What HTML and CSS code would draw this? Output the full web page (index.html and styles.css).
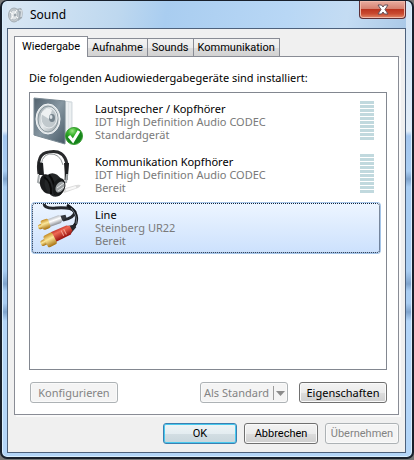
FILE: index.html
```html
<!DOCTYPE html>
<html lang="de">

<head>
    <meta charset="UTF-8">
    <meta name="viewport" content="width=device-width, initial-scale=1.0">
    <title>Sound</title>
    <link rel="stylesheet" href="styles.css">
</head>

<body>
    <div class="window">
        <header class="titlebar">
            <svg class="app-icon" width="16" height="16" viewBox="0 0 16 16">
                <path d="M8 2l5-1 2 4-1 6-4 3z" fill="#a3adb5" />
                <path d="M11 3l3 1-1 6" fill="none" stroke="#d5dce1" stroke-width="1.5" />
                <ellipse cx="6" cy="8" rx="5.5" ry="7" fill="#c4cace" stroke="#a3adb5" />
                <ellipse cx="6" cy="8" rx="3.5" ry="5" fill="#dfe3e6" stroke="#a5afb6" stroke-width=".7" />
                <path d="M2 5l8 6M3 12l6-9" stroke="#fff" />
                <circle cx="7" cy="8" r="1.5" fill="#9ca5ac" />
            </svg>
            <h1 class="title">Sound</h1>
            <button class="close" type="button" aria-label="Schließen">
                <svg width="12" height="11" viewBox="0 0 12 11">
                    <path d="M1 1h3.500L6 3l1.500-2H11L8 5.500 11 10H7.500L6 8l-1.500 2H1l3-4.500z" fill="#fff" stroke="#63515a" />
                </svg>
            </button>
        </header>

        <main class="client">
            <div class="tabs" role="tablist">
                <button class="tab active" type="button" role="tab" aria-selected="true">Wiedergabe</button>
                <button class="tab" type="button" role="tab">Aufnahme</button>
                <button class="tab" type="button" role="tab">Sounds</button>
                <button class="tab" type="button" role="tab">Kommunikation</button>
            </div>

            <section class="panel" role="tabpanel">
                <p class="intro" id="intro">Die folgenden Audiowiedergabegeräte sind installiert:</p>

                <ul class="devices" role="listbox" aria-labelledby="intro">
                    <li class="device" role="option">
                        <svg class="device-icon" width="50" height="50" viewBox="0 0 50 50">
                            <defs>
                                <linearGradient id="box" x2="1" y2="1">
                                    <stop offset="0" stop-color="#52626e" />
                                    <stop offset=".5" stop-color="#8797a2" />
                                    <stop offset="1" stop-color="#465966" />
                                </linearGradient>
                                <linearGradient id="cone" x2="1" y2="1">
                                    <stop offset="0" stop-color="#8c999f" />
                                    <stop offset=".5" stop-color="#e9edef" />
                                    <stop offset="1" stop-color="#8f9a9f" />
                                </linearGradient>
                                <radialGradient id="ok" cx=".4" cy=".2">
                                    <stop offset="0" stop-color="#9de586" />
                                    <stop offset=".5" stop-color="#38b52b" />
                                    <stop offset="1" stop-color="#16851b" />
                                </radialGradient>
                            </defs>
                            <path d="M31 4l8 1v30l-8 11z" fill="#e1e6e9" stroke="#d3dade" />
                            <path d="M34 5v36M37 6v30" stroke="#f7f9fa" />
                            <path d="M1 1l31 3v43L1 38z" fill="url(#box)" stroke="#7a8993" />
                            <ellipse cx="15" cy="22" rx="12" ry="15" fill="#d9dfe2" stroke="#f3f6f7" />
                            <ellipse cx="15" cy="22" rx="10" ry="13" fill="url(#cone)" stroke="#8c999f" />
                            <ellipse cx="16" cy="21" rx="8" ry="10" fill="#c1c9cd" stroke="#e9edef" />
                            <path d="M16 22L8 17q5-8 11-4z" fill="#eef1f2" />
                            <ellipse cx="19" cy="21" rx="3" ry="4" fill="#76848d" />
                            <ellipse cx="18" cy="20" rx="1.500" ry="2" fill="#dce2e6" />
                            <circle cx="41" cy="39" r="8.500" fill="url(#ok)" stroke="#3a9d34" />
                            <path d="M36 39l4 5 6-10" fill="none" stroke="#fff" stroke-width="3" />
                        </svg>
                        <div class="info">
                            <strong class="name">Lautsprecher / Kopfhörer</strong>
                            <span>IDT High Definition Audio CODEC</span>
                            <span>Standardgerät</span>
                        </div>
                        <div class="level"></div>
                    </li>
                    <li class="device" role="option">
                        <svg class="device-icon" width="50" height="50" viewBox="0 0 50 50">
                            <path d="M29 39l14-4q8-1 2 3l-14 5z" fill="#dcdcdc" />
                            <path d="M33 40l10-3" stroke="#f8f8f8" stroke-width="2" />
                            <path d="M6 24Q3 3 16 2q15-3 18 12l-1 16" fill="none" stroke="#292a2c" stroke-width="3" />
                            <path d="M8 22Q7 6 16 4q11-1 14 11" fill="none" stroke="#969a9c" />
                            <path d="M5 12l5 1 1 12H6zM31 13h5l-1 13-3 1z" fill="#1d1e20" />
                            <path d="M6 25l-1 7 5 3M34 24l-1 9" fill="none" stroke="#a6abad" stroke-width="2" />
                            <ellipse cx="14" cy="34" rx="7" ry="10" fill="#1a1b1d" transform="rotate(-15 14 34)" />
                            <ellipse cx="21" cy="35" rx="9" ry="12" fill="#242628" transform="rotate(-20 21 35)" />
                            <path d="M11 27q8 5 7 17M16 25q6 6 6 20" fill="none" stroke="#090909" stroke-width="2" />
                            <ellipse cx="26" cy="37" rx="6" ry="9" fill="#17191a" transform="rotate(20 26 37)" />
                            <ellipse cx="27" cy="37" rx="4" ry="6" fill="#9da2a4" transform="rotate(30 27 37)" />
                            <path d="M24 38l7-5M25 41l6-4" stroke="#e4e6e7" />
                        </svg>
                        <div class="info">
                            <strong class="name">Kommunikation Kopfhörer</strong>
                            <span>IDT High Definition Audio CODEC</span>
                            <span>Bereit</span>
                        </div>
                        <div class="level"></div>
                    </li>
                    <li class="device selected" role="option" aria-selected="true">
                        <svg class="device-icon" width="50" height="50" viewBox="0 0 50 50">
                            <defs>
                                <linearGradient id="gold" x2="0" y2="1">
                                    <stop offset="0" stop-color="#c48a22" />
                                    <stop offset=".4" stop-color="#fbe79a" />
                                    <stop offset="1" stop-color="#a8700f" />
                                </linearGradient>
                                <linearGradient id="silver" x2="0" y2="1">
                                    <stop offset="0" stop-color="#b9bdc3" />
                                    <stop offset=".4" stop-color="#fff" />
                                    <stop offset="1" stop-color="#8c9097" />
                                </linearGradient>
                                <linearGradient id="red" x2="0" y2="1">
                                    <stop offset="0" stop-color="#c5342c" />
                                    <stop offset=".3" stop-color="#ee6a55" />
                                    <stop offset="1" stop-color="#98110f" />
                                </linearGradient>
                            </defs>
                            <path d="M11 1q1 5 12 4 16-1 19 4-1 6-12 8" fill="none" stroke="#25282d" stroke-width="3" />
                            <path d="M34 2q12 7 9 18-2 4-5 6" fill="none" stroke="#15181c" stroke-width="3" />
                            <path d="M38 5q7 8 5 16" fill="none" stroke="#717a84" />
                            <g transform="translate(5 24) rotate(-20)">
                                <path d="M24-3l6 1v3l-6 2z" fill="#33373d" />
                                <path d="M11-4h12l2 1v5l-2 2H11z" fill="url(#silver)" />
                                <rect y="-2" width="6" height="5" rx="2" fill="url(#gold)" />
                                <rect x="4" y="-5" width="8" height="10" rx="2" fill="url(#gold)" />
                            </g>
                            <g transform="translate(8 41) rotate(-27)">
                                <path d="M32-4l7 2v3l-7 3z" fill="#24272c" />
                                <path d="M14-6l17 1 3 2v5l-3 3H14z" fill="url(#red)" />
                                <path d="M24-3v6M27-3v6" stroke="#f2a091" />
                                <rect y="-3" width="8" height="6" rx="2" fill="url(#gold)" />
                                <rect x="5" y="-6" width="10" height="13" rx="2" fill="url(#gold)" />
                            </g>
                        </svg>
                        <div class="info">
                            <strong class="name">Line</strong>
                            <span>Steinberg UR22</span>
                            <span>Bereit</span>
                        </div>
                    </li>
                </ul>

                <div class="actions">
                    <button class="btn push" type="button" disabled>Konfigurieren</button>
                    <button class="btn split" type="button" disabled>
                        <span>Als Standard</span>
                        <svg class="arrow" width="15" height="14" viewBox="0 0 15 14">
                            <path d="M1.500 0v14" stroke="#9b9b9b" />
                            <path d="M4 5h9L8.500 10z" fill="#8b8b8b" />
                        </svg>
                    </button>
                    <button class="btn" type="button">Eigenschaften</button>
                </div>
            </section>

            <footer class="footer">
                <button class="btn default" type="button">OK</button>
                <button class="btn" type="button">Abbrechen</button>
                <button class="btn" type="button" disabled>Übernehmen</button>
            </footer>
        </main>
    </div>
</body>

</html>
```
FILE: styles.css
```css
* {
    box-sizing: border-box;
}

body {
    margin: 0;
    background-color: #777;
    color: #000;
    font-family: "Noto Sans", "Open Sans", sans-serif;
    font-size: 11px;
    line-height: 13px;
}

button {
    font: inherit;
    color: inherit;
    white-space: nowrap;
}

/* window frame */
.window {
    padding: 0 6px 4px 5px;
    border: 2px solid #18202c;
    border-top-width: 1px;
    border-radius: 7px;
    background: linear-gradient(#d3e4f4, #e2edf8 130px, #a4c6ee 135px, #a9cdf2 170px, #7fa3cc 178px, #a9cdf2 186px, #a9cdf2 270px, #7fa3cc 283px, #a9cdf2 290px, #a9cdf2 302px, #7fa3cc 311px, #b3d5f8 320px, #b3d5f8);
    box-shadow: inset 0 0 0 1px #d9efff;
}

.titlebar {
    display: flex;
    align-items: center;
    height: 27px;
    background: linear-gradient(100deg, #d9e7f4, #bed8ef 28%, #a9cdf0 40%, #b8d7f5 70%, #c4dcf3 85%, #abc9e7);
}

.app-icon {
    margin-left: 1px;
}

.title {
    flex: 1;
    margin: 0 0 0 6px;
    font-size: 12px;
    font-weight: normal;
}

.close {
    display: flex;
    align-items: center;
    justify-content: center;
    align-self: flex-start;
    width: 47px;
    height: 18px;
    padding: 0;
    border: 1px solid #5c2f36;
    border-top: 0;
    border-radius: 0 0 4px 4px;
    background: linear-gradient(#e9ada0, #d68271 45%, #bb3520 50%, #c94a30 75%, #e28a69);
    box-shadow: inset 0 0 0 1px #f0b9aa;
}

.client {
    padding: 7px 6px 8px;
    border: 1px solid #4d617c;
    background-color: #f0f0f0;
}

/* tabs */
.tabs {
    display: flex;
    align-items: flex-end;
}

.tabs,
.footer {
    font-family: Roboto, "Noto Sans", sans-serif;
}

.tab {
    height: 18px;
    padding: 0 4px;
    border: 1px solid #898c95;
    border-bottom: 0;
    border-left: 0;
    background: linear-gradient(#f3f3f3, #ebebeb 50%, #dcdcdc 51%, #d2d2d2);
}

.tab.active {
    height: 21px;
    margin-bottom: -1px;
    padding: 0 7px 2px;
    border-left: 1px solid #898c95;
    background: #fff;
    z-index: 1;
}

.panel {
    padding: 14px 11px 11px 14px;
    border: 1px solid #898c95;
    background-color: #fff;
    box-shadow: 2px 2px #fafafa;
}

.intro {
    margin: 0 0 8px;
}

/* device list */
.devices {
    display: flex;
    flex-direction: column;
    gap: 3px;
    min-height: 278px;
    margin: 0;
    padding: 4px 6px 4px 2px;
    border: 1px solid #828790;
    list-style: none;
}

.device {
    display: flex;
    align-items: flex-start;
    height: 50px;
    padding: 0 6px 0 1px;
    border-radius: 3px;
}

.device.selected {
    background: linear-gradient(#edf5ff, #cce1fd);
    outline: 1px dotted #10233c;
    outline-offset: -1px;
    box-shadow: 0 0 0 1px #a5c5e9;
}

.device-icon {
    flex: none;
}

.info {
    display: flex;
    flex: 1;
    flex-direction: column;
    padding: 5px 0 0 12px;
    color: #7a7a7a;
}

.name {
    color: #000;
    font-weight: normal;
}

.level {
    width: 14px;
    height: 39px;
    margin-top: 4px;
    background: repeating-linear-gradient(#c1d9de 0 3px, #fff 3px 4px);
}

/* buttons */
.btn {
    width: 74px;
    height: 21px;
    padding: 0;
    border: 1px solid #707070;
    border-radius: 3px;
    background: linear-gradient(#f3f3f3, #ebebeb 50%, #dddddd 51%, #cfcfcf);
    box-shadow: inset 0 0 0 1px #fafafa;
}

.btn:disabled {
    border-color: #adb2b5;
    background: #f4f4f4;
    color: #838383;
}

.btn.default {
    border-color: #3c7fb1;
    background: linear-gradient(#eef4f6, #e4edf1 50%, #d3dee3 51%, #c8d6dc);
    box-shadow: inset 0 0 0 1px #48c9ee;
}

.actions {
    display: flex;
    gap: 11px;
    margin-top: 12px;
}

.actions .btn {
    width: 88px;
}

.push {
    margin: 0 auto 0 1px;
}

.split {
    display: flex;
    align-items: center;
    justify-content: space-between;
    padding-left: 3px;
}

.footer {
    display: flex;
    justify-content: flex-end;
    gap: 7px;
    padding-top: 8px;
}
```
